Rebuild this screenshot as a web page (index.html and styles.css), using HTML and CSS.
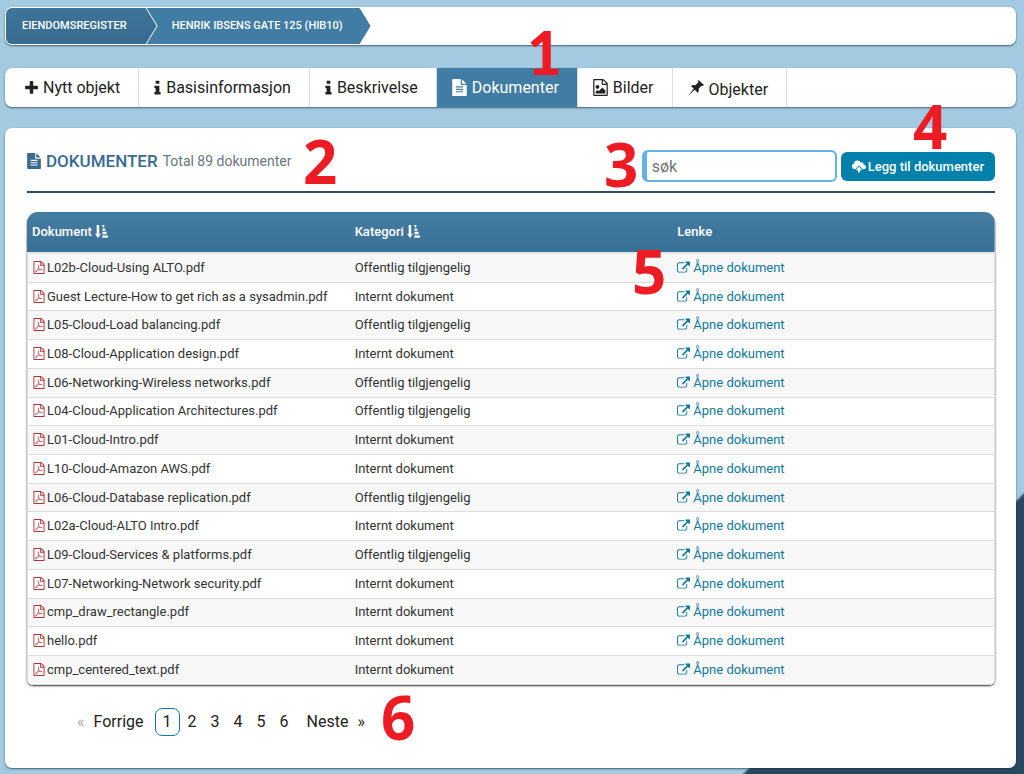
FILE: index.html
```html
<!DOCTYPE html>
<html lang="no">
<head>
<meta charset="utf-8">
<title>Dokumenter</title>
<link rel="stylesheet" href="styles.css">
</head>
<body>
<svg class="sprite" aria-hidden="true">
  <symbol id="plus" viewBox="192 128 1408 1536"><path d="M1600 736v192q0 40-28 68t-68 28h-416v416q0 40-28 68t-68 28h-192q-40 0-68-28t-28-68v-416h-416q-40 0-68-28t-28-68v-192q0-40 28-68t68-28h416v-416q0-40 28-68t68-28h192q40 0 68 28t28 68v416h416q40 0 68 28t28 68z"/></symbol>
  <symbol id="info" viewBox="576 64 640 1536"><path d="M1216 1344v128q0 26-19 45t-45 19h-512q-26 0-45-19t-19-45v-128q0-26 19-45t45-19h64v-384h-64q-26 0-45-19t-19-45v-128q0-26 19-45t45-19h384q26 0 45 19t19 45v576h64q26 0 45 19t19 45zm-128-1152v192q0 26-19 45t-45 19h-256q-26 0-45-19t-19-45v-192q0-26 19-45t45-19h256q26 0 45 19t19 45z"/></symbol>
  <symbol id="file" viewBox="128 0 1536 1792"><path d="M1596 476q14 14 28 36h-472v-472q22 14 36 28zm-476 164h544v1056q0 40-28 68t-68 28h-1344q-40 0-68-28t-28-68v-1600q0-40 28-68t68-28h800v544q0 40 28 68t68 28zm160 736v-64q0-14-9-23t-23-9h-704q-14 0-23 9t-9 23v64q0 14 9 23t23 9h704q14 0 23-9t9-23zm0-256v-64q0-14-9-23t-23-9h-704q-14 0-23 9t-9 23v64q0 14 9 23t23 9h704q14 0 23-9t9-23zm0-256v-64q0-14-9-23t-23-9h-704q-14 0-23 9t-9 23v64q0 14 9 23t23 9h704q14 0 23-9t9-23z"/></symbol>
  <symbol id="image" viewBox="128 0 1536 1792"><path d="M1596 380q28 28 48 76t20 88v1152q0 40-28 68t-68 28h-1344q-40 0-68-28t-28-68v-1600q0-40 28-68t68-28h896q40 0 88 20t76 48zm-444-244v376h376q-10-29-22-41l-313-313q-12-12-41-22zm384 1528v-1024h-416q-40 0-68-28t-28-68v-416h-768v1536h1280zm-128-448v320h-1024v-192l192-192 128 128 384-384zm-832-192q-80 0-136-56t-56-136 56-136 136-56 136 56 56 136-56 136-136 56z"/></symbol>
  <symbol id="pdf" viewBox="128 0 1536 1792"><path d="M1596 380q28 28 48 76t20 88v1152q0 40-28 68t-68 28h-1344q-40 0-68-28t-28-68v-1600q0-40 28-68t68-28h896q40 0 88 20t76 48zm-444-244v376h376q-10-29-22-41l-313-313q-12-12-41-22zm384 1528v-1024h-416q-40 0-68-28t-28-68v-416h-768v1536h1280zm-514-593q33 26 84 56 59-7 117-7 147 0 177 49 16 22 2 52 0 1-1 2l-2 2v1q-6 38-71 38-48 0-115-20t-130-53q-221 24-392 83-153 262-242 262-15 0-28-7l-24-12q-1-1-6-5-10-10-6-36 9-40 56-91.5t132-96.5q14-9 23 6 2 2 2 4 52-85 107-197 68-136 104-262-24-82-30.5-159.5t6.5-127.5q11-40 42-40h22q23 0 35 15 18 21 9 68-2 6-4 8 1 3 1 8v30q-2 123-14 192 55 164 146 238zm-576 411q52-24 137-158-51 40-87.5 84t-49.5 74zm398-920q-15 42-2 132 1-7 7-44 0-3 7-43 1-4 4-8-1-1-1-2-1-2-1-3-1-22-13-36 0 1-1 2v2zm-124 661q135-54 284-81-2-1-13-9.5t-16-13.5q-76-67-127-176-27 86-83 197-30 56-45 83zm646-16q-24-24-140-24 76 28 124 28 14 0 18-1 0-1-2-3z"/></symbol>
  <symbol id="link" viewBox="0 0 1792 1536"><path d="M1408 928v320q0 119-84.5 203.5t-203.5 84.5h-832q-119 0-203.5-84.5t-84.5-203.5v-832q0-119 84.5-203.5t203.5-84.5h704q14 0 23 9t9 23v64q0 14-9 23t-23 9h-704q-66 0-113 47t-47 113v832q0 66 47 113t113 47h832q66 0 113-47t47-113v-320q0-14 9-23t23-9h64q14 0 23 9t9 23zm384-864v512q0 26-19 45t-45 19-45-19l-176-176-652 652q-10 10-23 10t-23-10l-114-114q-10-10-10-23t10-23l652-652-176-176q-19-19-19-45t19-45 45-19h512q26 0 45 19t19 45z"/></symbol>
  <symbol id="pin" viewBox="0 0 16 16"><path d="M10.500 0 16 5l-1.200.9-1.200-.2-2.900 3q.6 2.500-.8 4.200L6.800 9.800 0 16l5.800-7.200L3 6q1.800-1.300 4.300-.7l3.100-3-.5-1.200z"/></symbol>
  <symbol id="sort" viewBox="0 0 14 14"><path d="M1.800 0h2.700v9.500h2L3.200 14 0 9.500h1.800zM8 0h2v2.500H8zM8 3.700h3v2.500H8zM8 7.400h4.500v2.500H8zM8 11.200h6v2.500H8z"/></symbol>
  <symbol id="upload" viewBox="0 0 15 13"><path d="M3.400 9.500C1.400 9.500 0 8.200 0 6.300 0 4.900.8 3.800 2 3.300 2 1.400 3.600 0 5.700 0c1.600 0 2.900.8 3.500 2.100 1.700-.7 3.300.5 3.100 2.200C13.900 4.600 15 5.700 15 7.100c0 1.500-1.200 2.400-2.700 2.400h-.8L7.500 5.200 3.500 9.500zM7.500 6.500l3.500 4H8.600V13H6.400v-2.500H4z"/></symbol>
</svg>

<nav class="panel crumbs" aria-label="Brødsmulesti">
  <a class="crumb crumb-first" href="#">EIENDOMSREGISTER</a>
  <a class="crumb crumb-last" href="#">HENRIK IBSENS GATE 125 (HIB10)</a>
</nav>

<nav class="panel tabs" aria-label="Objektmeny">
  <a class="tab" href="#"><svg class="icon-plus"><use href="#plus"/></svg>Nytt objekt</a>
  <a class="tab" href="#"><svg class="icon-info"><use href="#info"/></svg>Basisinformasjon</a>
  <a class="tab" href="#"><svg class="icon-info"><use href="#info"/></svg>Beskrivelse</a>
  <a class="tab active" href="#" aria-current="page"><svg class="icon-file"><use href="#file"/></svg>Dokumenter</a>
  <a class="tab" href="#"><svg class="icon-file"><use href="#image"/></svg>Bilder</a>
  <a class="tab tab-pin" href="#"><svg class="icon-pin"><use href="#pin"/></svg>Objekter</a>
</nav>

<main class="panel content">
  <header class="heading">
    <h1><svg class="icon-title"><use href="#file"/></svg>DOKUMENTER <small>Total 89 dokumenter</small></h1>
    <div class="tools">
      <input class="search" type="search" placeholder="søk" aria-label="søk">
      <button class="add" type="button"><svg class="icon-upload"><use href="#upload"/></svg>Legg til dokumenter</button>
    </div>
  </header>

  <table class="documents">
    <thead><tr><th>Dokument <svg class="icon-sort"><use href="#sort"/></svg></th><th>Kategori <svg class="icon-sort"><use href="#sort"/></svg></th><th>Lenke</th></tr></thead>
    <tbody>
      <tr><td><svg class="icon-pdf"><use href="#pdf"/></svg>L02b-Cloud-Using ALTO.pdf</td><td>Offentlig tilgjengelig</td><td><a href="#"><svg class="icon-link"><use href="#link"/></svg>Åpne dokument</a></td></tr>
      <tr><td><svg class="icon-pdf"><use href="#pdf"/></svg>Guest Lecture-How to get rich as a sysadmin.pdf</td><td>Internt dokument</td><td><a href="#"><svg class="icon-link"><use href="#link"/></svg>Åpne dokument</a></td></tr>
      <tr><td><svg class="icon-pdf"><use href="#pdf"/></svg>L05-Cloud-Load balancing.pdf</td><td>Offentlig tilgjengelig</td><td><a href="#"><svg class="icon-link"><use href="#link"/></svg>Åpne dokument</a></td></tr>
      <tr><td><svg class="icon-pdf"><use href="#pdf"/></svg>L08-Cloud-Application design.pdf</td><td>Internt dokument</td><td><a href="#"><svg class="icon-link"><use href="#link"/></svg>Åpne dokument</a></td></tr>
      <tr><td><svg class="icon-pdf"><use href="#pdf"/></svg>L06-Networking-Wireless networks.pdf</td><td>Offentlig tilgjengelig</td><td><a href="#"><svg class="icon-link"><use href="#link"/></svg>Åpne dokument</a></td></tr>
      <tr><td><svg class="icon-pdf"><use href="#pdf"/></svg>L04-Cloud-Application Architectures.pdf</td><td>Offentlig tilgjengelig</td><td><a href="#"><svg class="icon-link"><use href="#link"/></svg>Åpne dokument</a></td></tr>
      <tr><td><svg class="icon-pdf"><use href="#pdf"/></svg>L01-Cloud-Intro.pdf</td><td>Internt dokument</td><td><a href="#"><svg class="icon-link"><use href="#link"/></svg>Åpne dokument</a></td></tr>
      <tr><td><svg class="icon-pdf"><use href="#pdf"/></svg>L10-Cloud-Amazon AWS.pdf</td><td>Internt dokument</td><td><a href="#"><svg class="icon-link"><use href="#link"/></svg>Åpne dokument</a></td></tr>
      <tr><td><svg class="icon-pdf"><use href="#pdf"/></svg>L06-Cloud-Database replication.pdf</td><td>Offentlig tilgjengelig</td><td><a href="#"><svg class="icon-link"><use href="#link"/></svg>Åpne dokument</a></td></tr>
      <tr><td><svg class="icon-pdf"><use href="#pdf"/></svg>L02a-Cloud-ALTO Intro.pdf</td><td>Internt dokument</td><td><a href="#"><svg class="icon-link"><use href="#link"/></svg>Åpne dokument</a></td></tr>
      <tr><td><svg class="icon-pdf"><use href="#pdf"/></svg>L09-Cloud-Services &amp; platforms.pdf</td><td>Offentlig tilgjengelig</td><td><a href="#"><svg class="icon-link"><use href="#link"/></svg>Åpne dokument</a></td></tr>
      <tr><td><svg class="icon-pdf"><use href="#pdf"/></svg>L07-Networking-Network security.pdf</td><td>Internt dokument</td><td><a href="#"><svg class="icon-link"><use href="#link"/></svg>Åpne dokument</a></td></tr>
      <tr><td><svg class="icon-pdf"><use href="#pdf"/></svg>cmp_draw_rectangle.pdf</td><td>Internt dokument</td><td><a href="#"><svg class="icon-link"><use href="#link"/></svg>Åpne dokument</a></td></tr>
      <tr><td><svg class="icon-pdf"><use href="#pdf"/></svg>hello.pdf</td><td>Internt dokument</td><td><a href="#"><svg class="icon-link"><use href="#link"/></svg>Åpne dokument</a></td></tr>
      <tr><td><svg class="icon-pdf"><use href="#pdf"/></svg>cmp_centered_text.pdf</td><td>Internt dokument</td><td><a href="#"><svg class="icon-link"><use href="#link"/></svg>Åpne dokument</a></td></tr>
    </tbody>
  </table>

  <nav class="pages" aria-label="Sider">
    <a class="step" href="#"><span class="arrow disabled">«</span>Forrige</a>
    <a class="page current" href="#" aria-current="page">1</a>
    <a class="page" href="#">2</a>
    <a class="page" href="#">3</a>
    <a class="page" href="#">4</a>
    <a class="page" href="#">5</a>
    <a class="page" href="#">6</a>
    <a class="step next" href="#">Neste<span class="arrow">»</span></a>
  </nav>
</main>

<span class="note note-1">1</span>
<span class="note note-2">2</span>
<span class="note note-3">3</span>
<span class="note note-4">4</span>
<span class="note note-5">5</span>
<span class="note note-6">6</span>
</body>
</html>
```

FILE: styles.css
```css
* { box-sizing: border-box; }

html {
  min-height: 100%;
  background: linear-gradient(315deg, #28485f 197px, #a3cae0 200px) fixed;
}

body {
  position: relative;
  display: flex;
  flex-direction: column;
  margin: 0;
  padding: 7px 8px 5px 5px;
  font: 13px/20px Roboto, sans-serif;
  color: #333;
}

a { color: inherit; text-decoration: none; }
svg { fill: currentColor; flex: none; }
.sprite { position: absolute; width: 0; height: 0; }

.panel {
  background: #fff;
  border-radius: 7px;
  box-shadow: 0 1px 2px rgba(30, 50, 70, .7);
}

/* Breadcrumbs */
.crumbs { display: flex; height: 38px; padding: 1px; }
.crumb {
  display: flex;
  align-items: center;
  color: #fff;
  font-size: 11px;
  font-weight: 500;
}
.crumb-first {
  z-index: 1;
  padding: 0 30px 0 16px;
  border-radius: 6px 0 0 6px;
  background: linear-gradient(#3e7499, #386b90);
  clip-path: polygon(0 0, calc(100% - 11px) 0, 100% 50%, calc(100% - 11px) 100%, 0 100%);
}
.crumb-last {
  margin-left: -10px;
  padding: 0 28px 0 25px;
  background: #407ca3;
  clip-path: polygon(0 0, calc(100% - 11px) 0, 100% 50%, calc(100% - 11px) 100%, 0 100%, 11px 50%);
}

/* Tabs */
.tabs { display: flex; height: 39px; margin-top: 23px; color: #222; }
.tab {
  display: flex;
  align-items: center;
  gap: 5px;
  padding: 0 18px 0 15px;
  border-right: 1px solid #ddd;
  font-size: 16px;
}
.tab:first-child { padding-left: 20px; }
.tab.active { background: #407ca3; color: #fff; }
.tab-pin { padding-top: 4px; }
.icon-plus { width: 13px; height: 14px; }
.icon-info { width: 7px; height: 15px; }
.icon-file { width: 15px; height: 17px; }
.icon-pin { width: 16px; height: 16px; margin-bottom: 4px; }

/* Document list */
.content { margin-top: 21px; padding: 21px 21px 32px 22px; }
.heading {
  display: flex;
  justify-content: space-between;
  height: 44px;
  border-bottom: 2px solid #2f4a60;
}
h1 {
  display: flex;
  align-items: center;
  gap: 5px;
  height: 24px;
  margin: 0;
  color: #386b90;
  font-size: 17px;
  font-weight: 500;
}
small { color: #6c757d; font-size: 14px; font-weight: 400; }
.icon-title { width: 14px; height: 16px; }

.tools { display: flex; align-items: center; gap: 4px; height: 34px; }
.search {
  width: 195px;
  height: 32px;
  padding: 0 5px;
  border: 2px solid #66afe9;
  border-left-width: 5px;
  border-radius: 6px;
  font: 16px Roboto, sans-serif;
}
.search::placeholder { color: #757575; }
.add {
  display: flex;
  align-items: center;
  gap: 2px;
  height: 29px;
  padding: 0 11px;
  border: 0;
  border-radius: 6px;
  background: #0081ab;
  color: #fff;
  font: 500 13px Roboto, sans-serif;
}
.icon-upload { width: 14px; height: 13px; }

.documents {
  width: 100%;
  height: 473px;
  margin-top: 19px;
  border-spacing: 0;
  table-layout: fixed;
  border-radius: 11px 11px 6px 6px;
  box-shadow: 0 1px 2px rgba(0, 0, 0, .8);
  overflow: hidden;
}
th, td { padding: 0 5px; text-align: left; white-space: nowrap; }
thead tr { background: linear-gradient(#457ca1, #386f95); }
th { height: 42px; border-bottom: 2px solid #e4e8eb; color: #fff; font-size: 13px; font-weight: 500; }
td { border-bottom: 1px solid #ddd; }
td:first-child { border-left: 1px solid #ddd; }
td:last-child { border-right: 1px solid #ddd; }
tbody tr { background: #fff; }
tbody tr:nth-child(odd) { background: #f8f8f8; }
td a { color: #117a9c; }
.documents svg { vertical-align: -2px; }
.icon-sort { width: 13px; height: 13px; }
.icon-pdf { width: 12px; height: 13px; margin-right: 2px; color: #b5333a; }
.documents .icon-link { width: 13px; height: 12px; margin-right: 3px; vertical-align: -1px; }

/* Pager */
.pages {
  display: flex;
  align-items: center;
  margin-top: 23px;
  padding-left: 50px;
  color: #222;
  font-size: 16px;
}
.step { display: flex; gap: 9px; margin-right: 11px; }
.next { margin: 0 0 0 11px; }
.disabled { color: #aaa; }
.page { width: 23px; line-height: 28px; text-align: center; }
.current { width: 25px; margin-right: 1px; border: 1px solid #117aa5; border-radius: 7px; line-height: 26px; }

/* Numbered callouts over the page */
.note {
  position: absolute;
  color: #ed1c24;
  font: 700 60px/44px "Open Sans", sans-serif;
}
.note-1 { left: 527px; top: 30px; font-family: Lato, sans-serif; font-weight: 900; }
.note-2 { left: 303px; top: 139px; }
.note-3 { left: 604px; top: 142px; }
.note-4 { left: 913px; top: 104px; }
.note-5 { left: 632px; top: 249px; }
.note-6 { left: 381px; top: 695px; }
```
